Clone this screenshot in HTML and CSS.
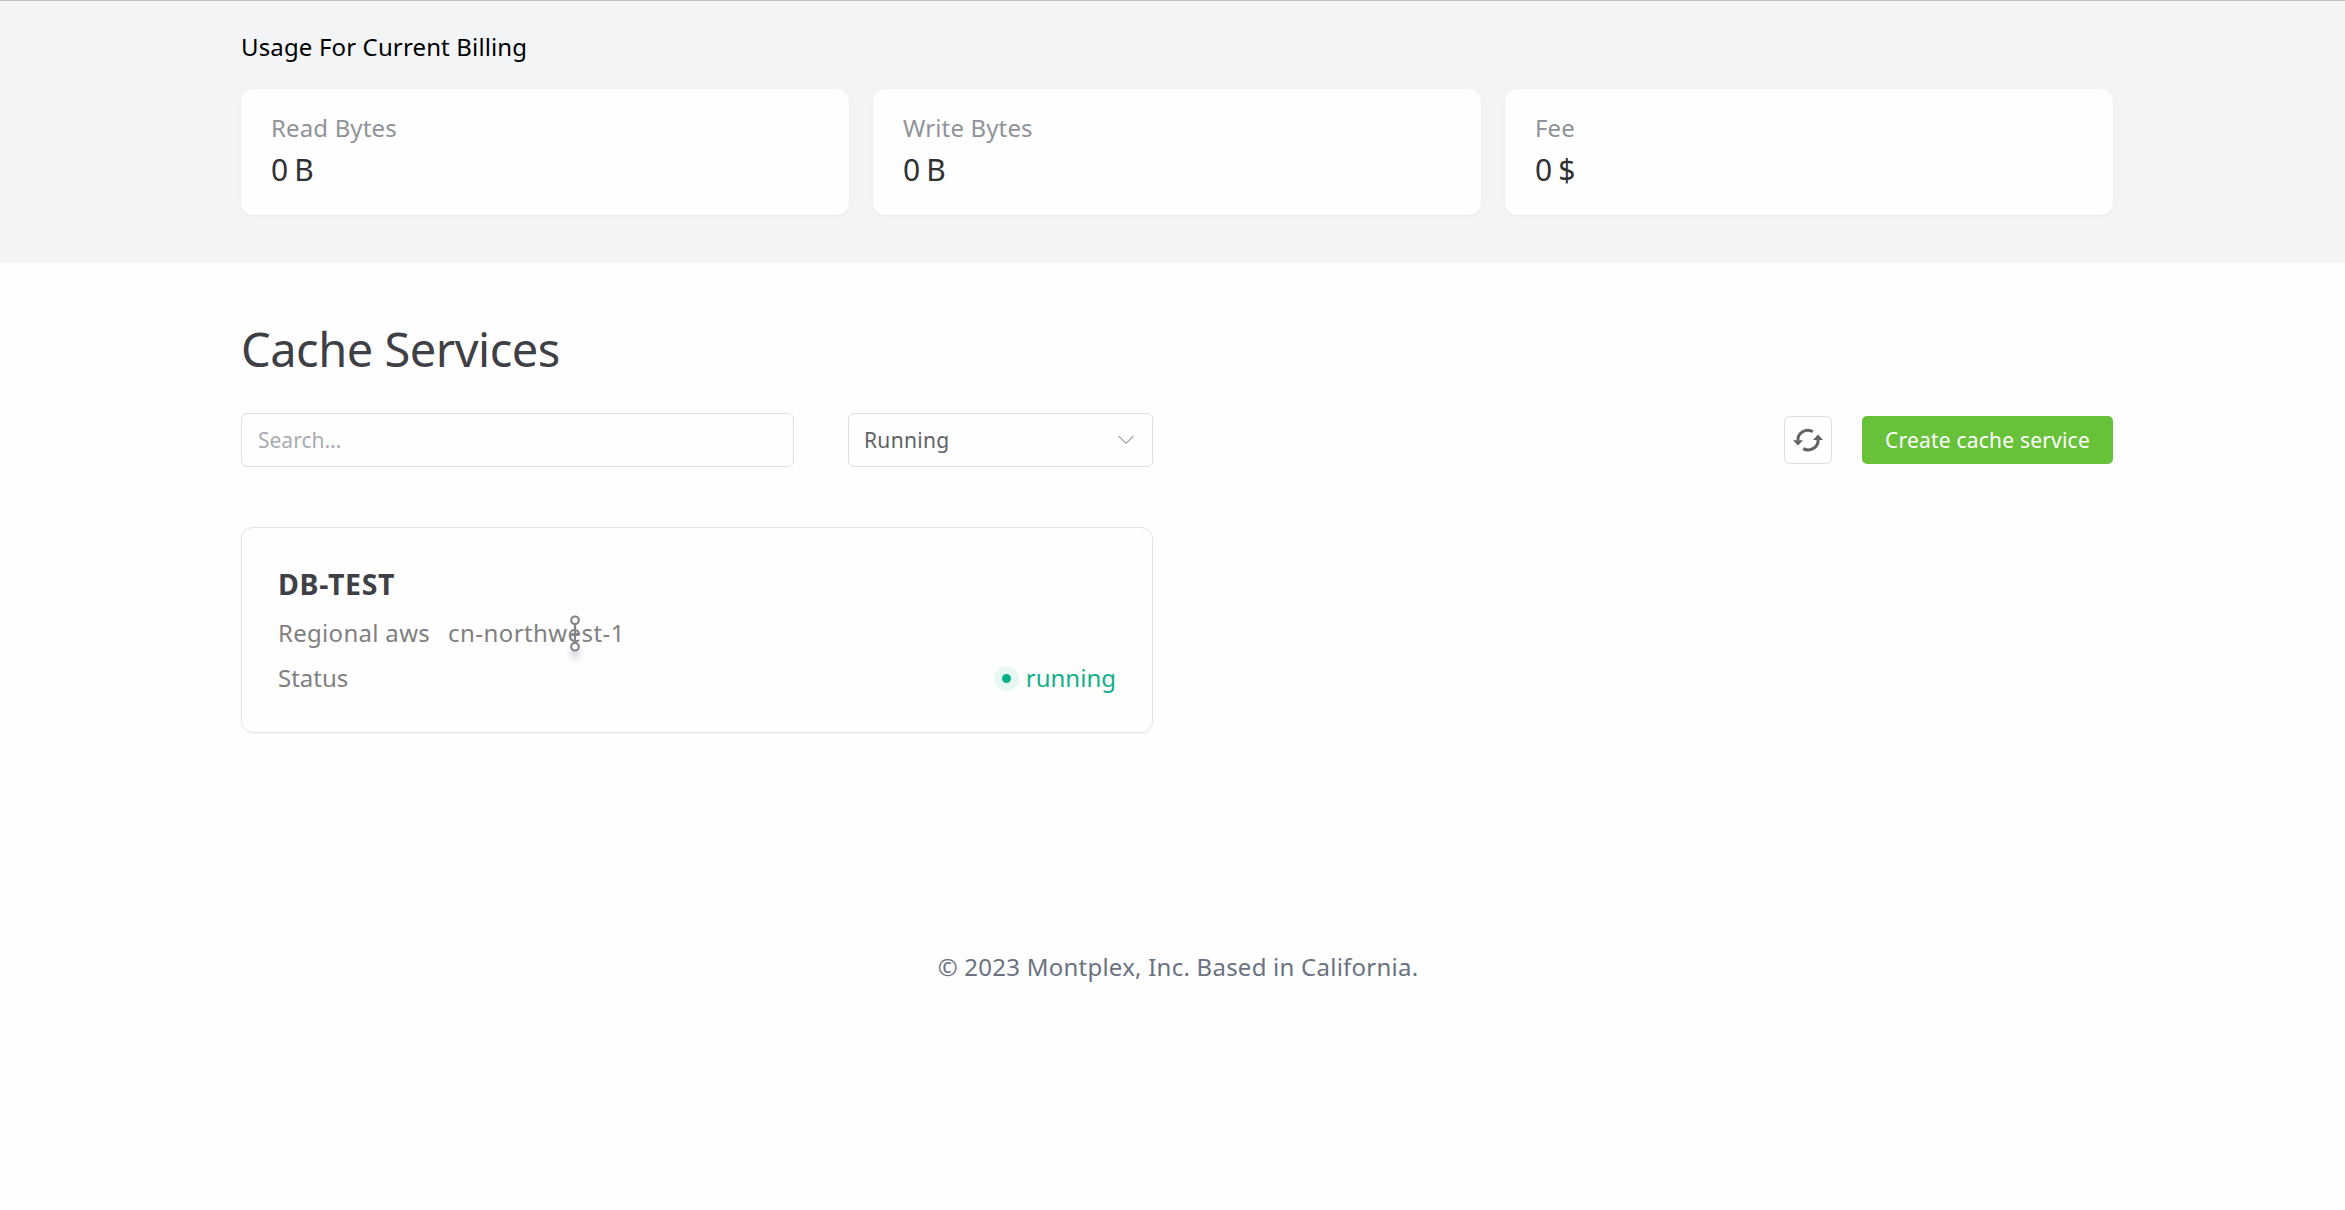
FILE: index.html
```
<!DOCTYPE html>
<html lang="en">
<head>
<meta charset="utf-8">
<title>Cache Services</title>
<link rel="stylesheet" href="styles.css">
</head>
<body>
<section class="usage">
  <div class="container">
    <h2 class="usage-title">Usage For Current Billing</h2>
    <div class="usage-grid">
      <div class="usage-card"><div class="usage-label">Read Bytes</div><div class="usage-value">0 B</div></div>
      <div class="usage-card"><div class="usage-label">Write Bytes</div><div class="usage-value">0 B</div></div>
      <div class="usage-card"><div class="usage-label">Fee</div><div class="usage-value">0 $</div></div>
    </div>
  </div>
</section>
<main class="container services">
  <h1 class="page-title">Cache Services</h1>
  <div class="toolbar">
    <input class="search" type="text" placeholder="Search..." aria-label="Search">
    <div class="select">
      <span>Running</span>
      <svg class="chevron" width="18" height="12" viewBox="0 0 18 12"><path d="M1.5 2 9 9.3 16.5 2" fill="none" stroke="#a8abb2" stroke-width="1.3"/></svg>
    </div>
    <button class="refresh" aria-label="Refresh">
      <svg width="32" height="32" viewBox="0 0 32 32"><g fill="none" stroke="#606266" stroke-width="3"><path d="M20.8 7.6A10 9.7 0 0 0 5.9 16.5"/><path d="M11.2 24.6A10 9.7 0 0 0 26.1 15.7"/></g><path d="M1 16.2h10l-5 5.4zM31 16h-10l5-5.4z" fill="#606266"/></svg>
    </button>
    <button class="create">Create cache service</button>
  </div>
  <article class="service">
    <h3 class="service-name">DB-TEST</h3>
    <div class="service-row">
      <span class="provider">Regional aws</span>
      <span class="region">cn-northwest-1</span>
    </div>
    <div class="service-row">
      <span>Status</span>
      <span class="status"><i class="dot"></i>running</span>
    </div>
    <svg class="pointer" width="18" height="50" viewBox="0 0 18 50">
      <ellipse class="pointer-shadow" cx="9" cy="39" rx="5" ry="6"/>
      <g fill="none" stroke="#858585" stroke-width="2.2"><path d="M9 10.5V29M6 20h6"/><circle cx="9" cy="6.3" r="3.8" fill="#fff"/><circle cx="9" cy="32.7" r="3.8" fill="#fff"/></g>
    </svg>
  </article>
</main>
<footer class="footer">© 2023 Montplex, Inc. Based in California.</footer>
</body>
</html>
```
FILE: styles.css
```
* { box-sizing: border-box; }
body {
  margin: 0;
  min-height: 1210px;
  background: #fefefe;
  font-family: "Noto Sans", "Open Sans", sans-serif;
  font-size: 24px;
  line-height: 36px;
}
h1, h2, h3 { margin: 0; font-weight: 400; }
button, input { font-family: inherit; margin: 0; }
.container { width: 1872px; margin: 0 auto 0 241px; }

.usage {
  height: 263px;
  padding-top: 28px;
  border-top: 1px solid #bfc0c4;
  background: #f3f4f6;
}
.usage-title { font-size: 24px; line-height: 36px; letter-spacing: 0.14px; color: #000; }
.usage-grid { display: grid; grid-template-columns: repeat(3, 1fr); gap: 24px; margin-top: 24px; }
.usage-card {
  height: 126px;
  padding: 21px 30px;
  border-radius: 12px;
  background: #fefefe;
  box-shadow: 0 1px 3px rgba(0, 0, 0, 0.06);
}
.usage-label { color: #909399; letter-spacing: 0.14px; }
.usage-value { margin-top: 1px; font-size: 30px; line-height: 45px; letter-spacing: -0.8px; color: #303133; }

.services { padding-top: 50px; }
.page-title { font-size: 47px; line-height: 72px; letter-spacing: -0.5px; color: #3f3f46; }
.toolbar { display: flex; align-items: center; height: 54px; margin-top: 28px; }
.search, .select {
  height: 54px;
  border: 1px solid #dcdfe6;
  border-radius: 6px;
  background: #fefefe;
  font-size: 21px;
}
.search { width: 553px; padding: 0 16px; outline: none; }
.search::placeholder { color: #a8abb2; opacity: 1; }
.select {
  display: flex;
  align-items: center;
  justify-content: space-between;
  width: 305px;
  margin-left: 54px;
  padding: 0 17px 0 15px;
  letter-spacing: 0.3px;
  color: #606266;
}
.refresh {
  display: flex;
  align-items: center;
  justify-content: center;
  width: 48px;
  height: 48px;
  margin-left: auto;
  padding: 0;
  border: 1px solid #dcdfe6;
  border-radius: 6px;
  background: #fefefe;
}
.create {
  width: 251px;
  height: 48px;
  margin-left: 30px;
  padding: 0;
  border: 0;
  border-radius: 5px;
  background: #67c23a;
  font-size: 21px;
  letter-spacing: 0.2px;
  color: #fff;
}

.service {
  position: relative;
  width: 912px;
  height: 206px;
  margin-top: 60px;
  padding: 35px 36px 0;
  border: 1px solid #e4e5e7;
  border-radius: 12px;
  box-shadow: 0 1px 3px rgba(0, 0, 0, 0.04);
}
.service-name {
  margin-bottom: 5px;
  font-size: 28.5px;
  font-weight: 700;
  line-height: 42px;
  letter-spacing: 0.7px;
  color: #3f3f46;
}
.service-row { display: flex; align-items: center; height: 45px; line-height: 45px; color: #808080; }
.provider { letter-spacing: 0.3px; }
.region { margin-left: 18px; letter-spacing: 0.42px; }
.status { display: flex; align-items: center; gap: 7px; margin-left: auto; color: #10b088; }
.dot { width: 25px; height: 25px; margin-top: 1px; border: 8px solid #e7f7f2; border-radius: 50%; background: #06b085; }
.pointer { position: absolute; left: 324px; top: 86px; }
.pointer-shadow { fill: #b9bec8; opacity: 0.6; filter: blur(3px); }

.footer { width: 1872px; margin: 216px 0 0 242px; text-align: center; letter-spacing: 0.24px; color: #6b7280; }
```
